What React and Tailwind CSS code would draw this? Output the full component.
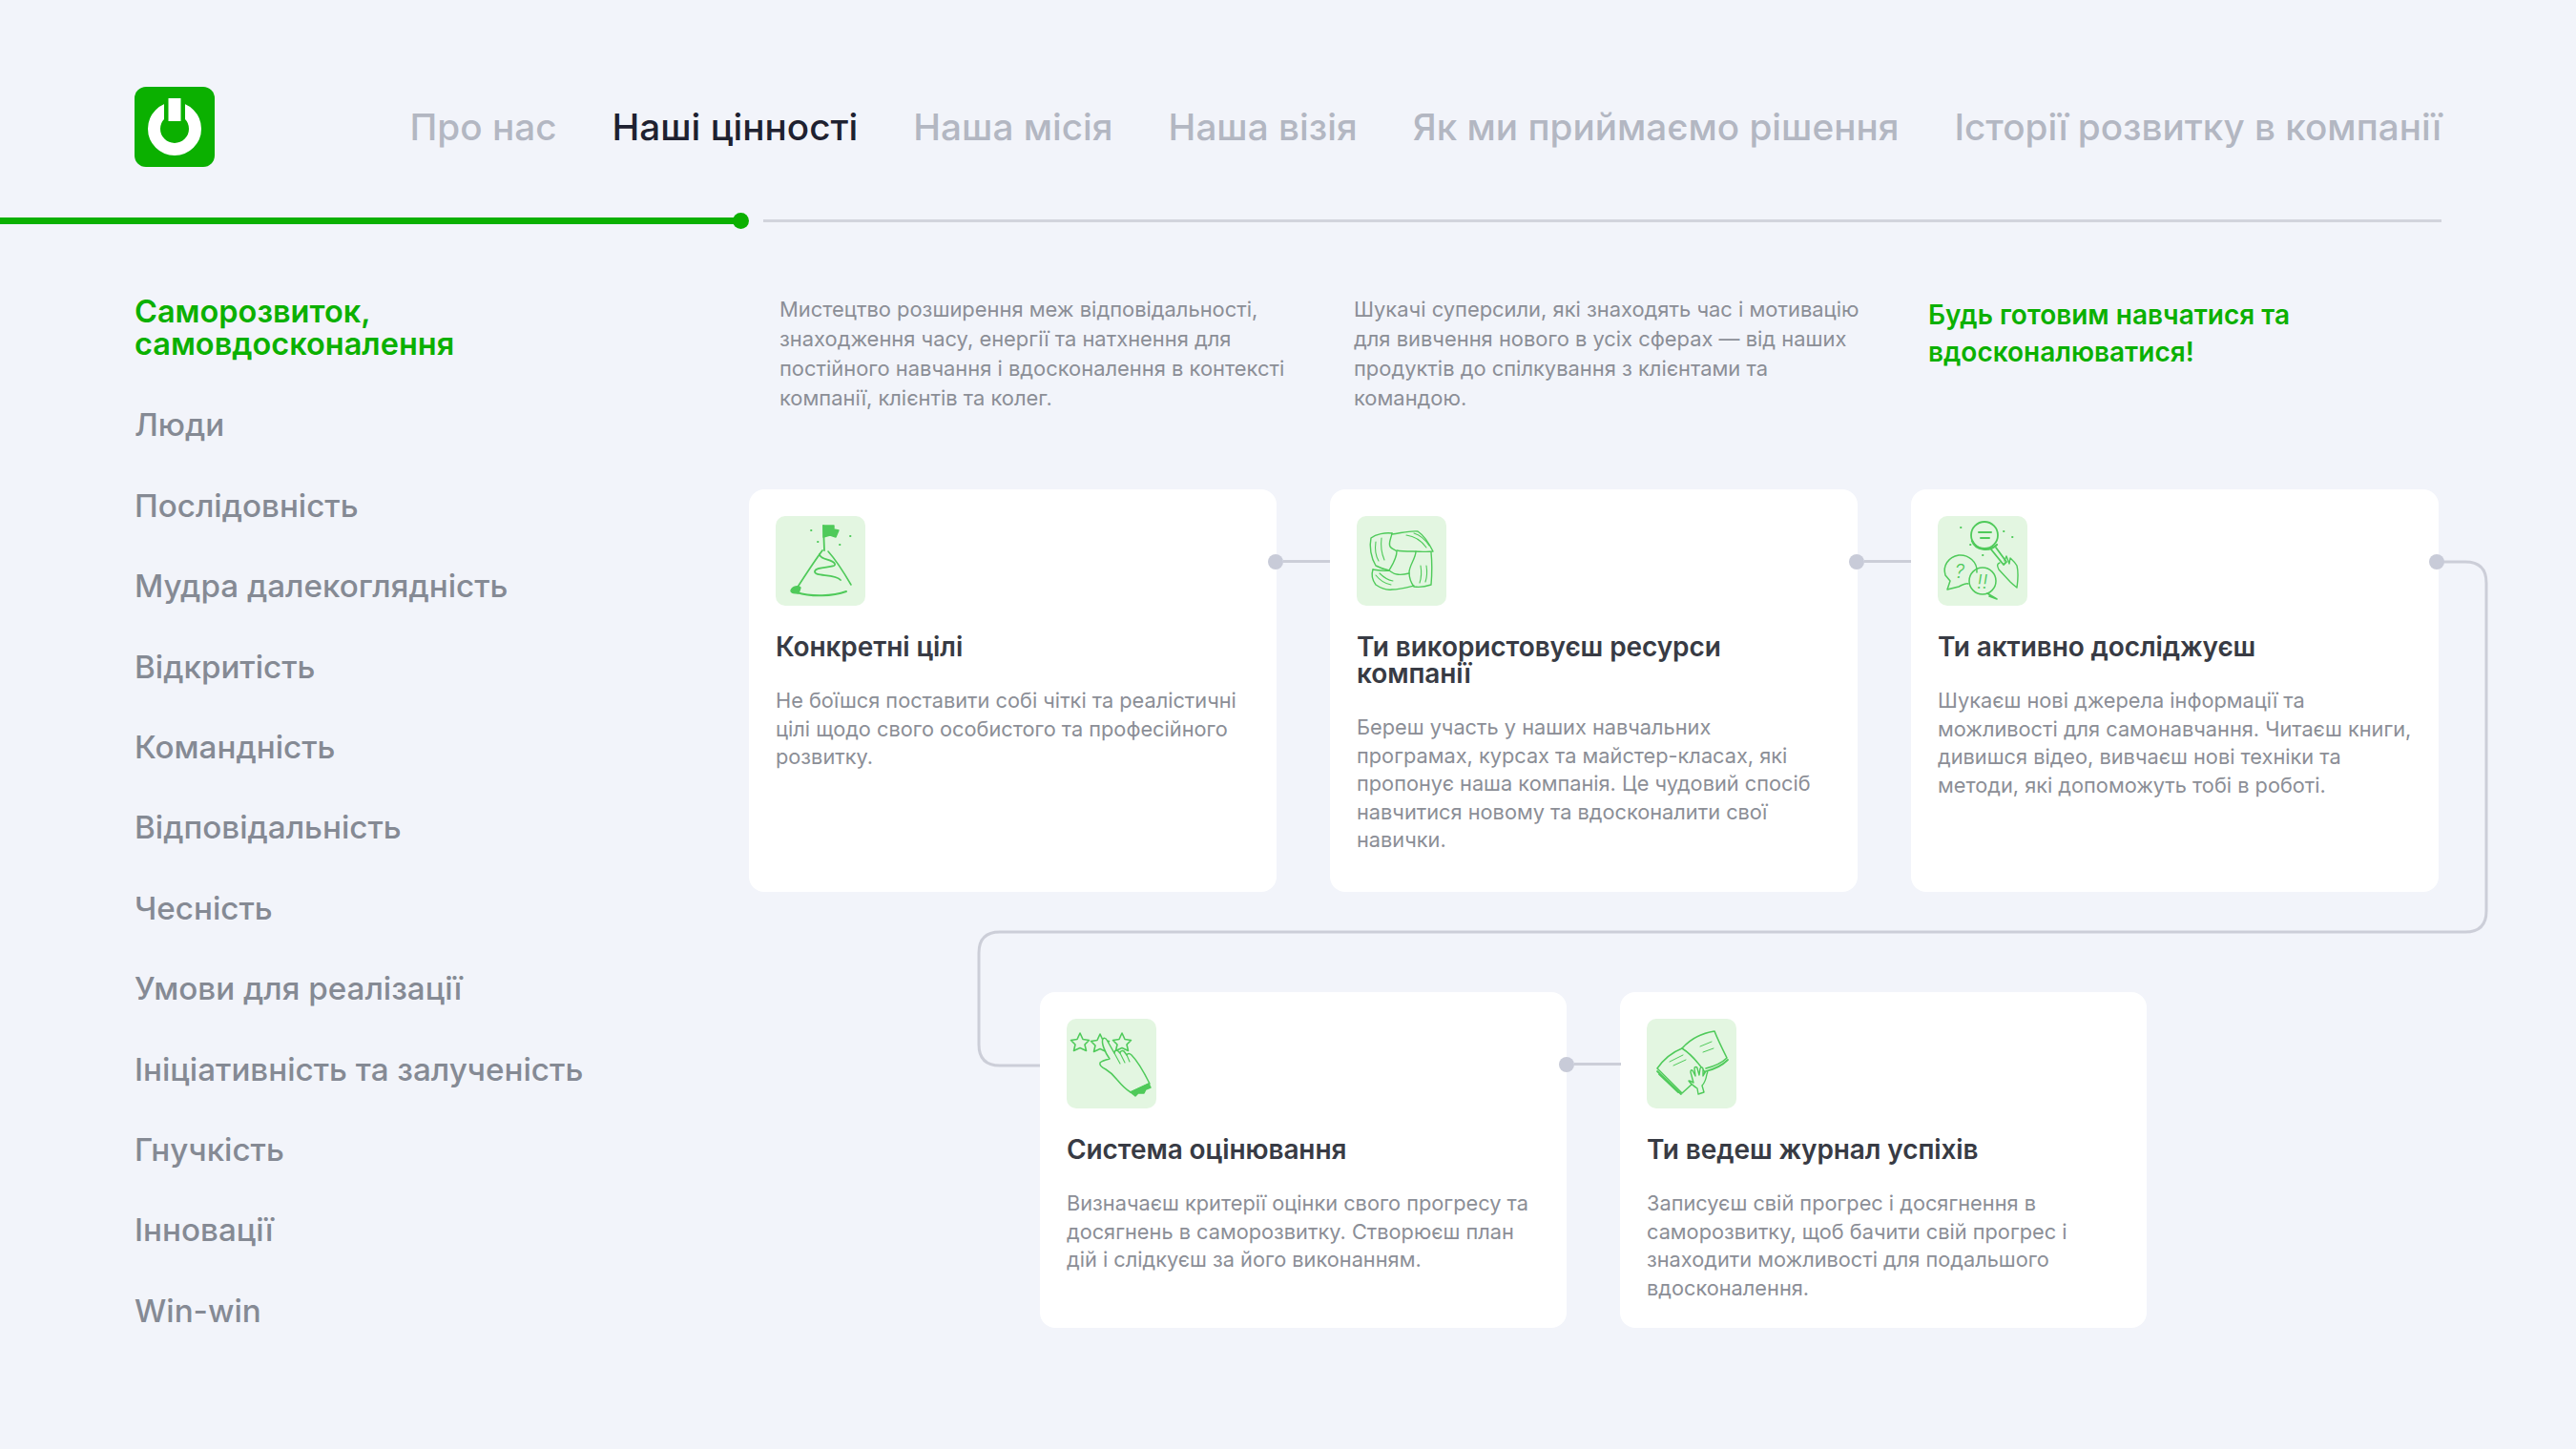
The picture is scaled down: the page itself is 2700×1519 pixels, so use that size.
import React from 'react';

const navItems = ['Про нас', 'Наші цінності', 'Наша місія', 'Наша візія', 'Як ми приймаємо рішення', 'Історії розвитку в компанії'];

const sideItems = ['Люди', 'Послідовність', 'Мудра далекоглядність', 'Відкритість', 'Командність', 'Відповідальність', 'Чесність', 'Умови для реалізації', 'Ініціативність та залученість', 'Гнучкість', 'Інновації', 'Win-win'];

const intro = [
  ['Мистецтво розширення меж відповідальності,', 'знаходження часу, енергії та натхнення для', 'постійного навчання і вдосконалення в контексті', 'компанії, клієнтів та колег.'],
  ['Шукачі суперсили, які знаходять час і мотивацію', 'для вивчення нового в усіх сферах — від наших', 'продуктів до спілкування з клієнтами та', 'командою.'],
];

function IconBox({ children }) {
  return (
    <div className="w-[94px] h-[94px] rounded-[10px] bg-[#e3f6e1] shrink-0">
      <svg width="94" height="94" viewBox="0 0 94 94" fill="none" stroke="#4fca5a" strokeWidth="1.4" strokeLinecap="round" strokeLinejoin="round">
        {children}
      </svg>
    </div>
  );
}

const FlagIcon = () => (
  <IconBox>
    <path d="M50 10 L51 36" strokeWidth="1.8" />
    <path d="M50 10 H61 V14 L66 15 L63 22 L57 20 L50 22 Z" fill="#4fca5a" />
    <path d="M49 36 C40 48 31 62 22 76" strokeWidth="1.8" />
    <path d="M55 37 C64 47 72 60 79 72" strokeWidth="1.6" />
    <path d="M46 40 C46 46 60 45 62 50 C64 55 42 52 41 58 C40 64 62 60 68 67" strokeWidth="1.8" />
    <path d="M16 78 C18 73 24 73 26 75 L24 81 C20 81 16 81 16 78 Z" fill="#4fca5a" />
    <path d="M22 80 C38 85 60 84 74 79" strokeWidth="2" />
    <path d="M37 15 h.5 M78 21 h.5 M44 27 h.5 M67 30 h.5" strokeWidth="1.8" />
  </IconBox>
);

const HandsIcon = () => (
  <IconBox>
    {/* top-left hand coming up from the wrist */}
    <path d="M37 18 C30 17 20 19 15 23 C13 32 15 44 20 52 C24 54 29 56 34 57" />
    <path d="M37 18 C36 24 33 28 35 32 C37 35 41 35 42 37 C42 44 38 50 34 57" />
    <path d="M20 27 C19 34 20 42 23 47 M26 23 C25 31 26 39 29 46" strokeWidth="1.1" />
    {/* top-right hand */}
    <path d="M37 19 C46 18 56 15 64 16 C70 20 76 29 80 37 C72 38 66 37 59 37 C52 37 46 37 42 36" />
    <path d="M52 20 C60 21 68 26 73 33 M60 18 C67 20 72 25 76 31" strokeWidth="1.1" />
    {/* bottom-right hand */}
    <path d="M62 37 C62 44 55 52 55 59 C55 65 57 70 60 74 C66 75 72 74 78 72 C79 60 79 48 78 38" />
    <path d="M66 70 C68 64 68 58 67 52 M72 69 C74 63 74 58 73 52" strokeWidth="1.1" />
    {/* bottom-left hand */}
    <path d="M17 56 C23 57 28 58 34 57 C37 59 39 61 42 61 C46 62 51 61 55 60" />
    <path d="M17 56 C15 62 17 68 20 72 C26 76 32 78 37 77 C45 77 52 75 60 73" />
    <path d="M20 62 C24 67 30 71 36 72 M24 60 C28 64 32 67 38 68" strokeWidth="1.1" />
  </IconBox>
);

const SearchIcon = () => (
  <IconBox>
    <circle cx="49" cy="20" r="14" strokeWidth="1.8" />
    <path d="M36 26 C40 36 54 38 62 30" strokeWidth="2.2" />
    <path d="M43 17 H56 M45 23 H54" strokeWidth="2" />
    <path d="M56 35 L69 51 L72 48 L61 33" strokeWidth="1.8" />
    <path d="M65 49 C62 50 62 52 64 56 L76 69 C79 72 82 74 83 75 C84 68 85 60 83 52 C81 48 78 46 76 44 L75 50 L72 42 L70 47" />
    <path d="M41 59 C42 48 32 40 22 41 C11 43 5 52 8 62 L13 68 L10 77 L22 74 C26 72 30 70 32 71" strokeWidth="1.5" />
    <circle cx="47" cy="68" r="14" strokeWidth="1.5" />
    <path d="M52 81 L62 87 L54 84" strokeWidth="1.6" />
    <text x="18" y="65" fontFamily="Inter, sans-serif" fontSize="20" fontWeight="300" fill="#4fca5a" stroke="none" fontStyle="italic">?</text>
    <text x="41" y="76" fontFamily="Inter, sans-serif" fontSize="20" fontWeight="300" fill="#4fca5a" stroke="none" fontStyle="italic">!!</text>
    <path d="M24 12 h.5 M69 16 h.5 M78 22 h.5 M34 30 h.5 M47 41 h.5" strokeWidth="1.8" />
  </IconBox>
);

const Star = ({ x, y }) => (
  <path
    transform={`translate(${x} ${y})`}
    d="M0 -10 L3 -3.5 L9.5 -2.5 L5 2 L6.5 8.5 L0 5.5 L-6.5 8.5 L-5 2 L-9.5 -2.5 L-3 -3.5 Z"
    strokeWidth="1.6"
  />
);

const RatingIcon = () => (
  <IconBox>
    <Star x={14} y={25} />
    <Star x={35} y={26} />
    <Star x={58} y={25} />
    <path d="M38 21 C36 25 40 35 45 42 C41 43 37 44 35 46 C34 49 37 51 41 53 C46 56 50 60 53 64 C58 70 62 74 67 77 L87 68 C82 58 76 46 68 38 C66 36 64 36 63 38 L60 34 C58 33 56 34 56 36 L53 33 C51 33 50 34 50 36 L42 22 C41 20 39 20 38 21 Z" strokeWidth="1.5" fill="#e3f6e1" />
    <path d="M50 36 L56 47 M56 36 L61 46 M63 38 L66 45" strokeWidth="1.1" />
    <path d="M67 77 L86 68 L88 72 L83 74 L81 78 L75 78 L72 81 Z" fill="#4fca5a" />
  </IconBox>
);

const BookIcon = () => (
  <IconBox>
    <path d="M11 52 C18 42 27 35 37 31 C45 36 54 46 61 56 L37 78 Z" strokeWidth="1.5" />
    <path d="M37 31 C46 21 58 15 71 13 C75 23 80 33 84 41 C78 47 70 50 62 52" strokeWidth="1.6" />
    <path d="M11 55 L36 79 M13 58 L33 77" strokeWidth="1.8" />
    <path d="M62 55 C70 53 78 50 85 43" strokeWidth="1.8" />
    <path d="M24 45 L38 38 M28 49 L41 43 M56 29 L68 24 M59 35 L70 31" strokeWidth="1" />
    <path d="M44 65 C46 65 47 66 49 67 L46 56 C46 53 48 53 49 56 L51 60 L50 52 C50 50 53 50 53 52 L55 59 L56 52 C57 50 59 51 59 53 L59 60 L62 55 C64 54 64 56 63 58 C62 64 60 68 58 70 L60 77 L54 79 L53 73 C50 71 46 68 44 65 Z" fill="#e3f6e1" strokeWidth="1.4" />
  </IconBox>
);

function Link() {
  return (
    <div className="absolute left-[544px] top-[67px] w-[65px] h-[17px] flex items-center z-10">
      <div className="w-[16px] h-[16px] rounded-full bg-[#c8cbd8] shrink-0" />
      <div className="h-[3px] flex-1 bg-[#ccced8]" />
    </div>
  );
}

function Card({ icon, title, text, linked, className }) {
  return (
    <div className={`relative bg-white rounded-[16px] p-[28px] ${className}`}>
      {icon}
      <h3 className="mt-[29px] text-[28px] leading-[28px] font-semibold text-[#383b44] tracking-[-0.1px]">{title}</h3>
      <div className="mt-[28px] text-[21.75px] leading-[29.5px] text-[#8b8e96]">
        {text.map((line) => <div key={line} className="whitespace-nowrap">{line}</div>)}
      </div>
      {linked && <Link />}
    </div>
  );
}

export default function App() {
  return (
    <div className="w-[2700px] h-[1519px] bg-[#f2f4fa] overflow-hidden font-[Inter,sans-serif]">
      <header className="flex items-center justify-between pt-[91px] pl-[141px] pr-[141px]">
        <div className="w-[84px] h-[84px] rounded-[12px] bg-[#0bb000] flex items-center justify-center">
          <svg width="60" height="62" viewBox="0 0 60 62">
            <circle cx="30" cy="33" r="21.5" fill="none" stroke="#fff" strokeWidth="13" />
            <rect x="19" y="0" width="22" height="29" fill="#0bb000" />
            <rect x="23.5" y="1" width="13" height="24" fill="#fff" />
          </svg>
        </div>
        <nav className="flex gap-[58px] text-[38.7px] leading-[48px] font-medium text-[#b3b7c2]">
          {navItems.map((item, i) => (
            <span key={item} className={i === 1 ? 'text-[#1e2130]' : ''}>{item}</span>
          ))}
        </nav>
      </header>

      <div className="mt-[48px] flex items-center h-[17px] pr-[141px]">
        <div className="w-[770px] h-[7px] bg-[#0bb000]" />
        <div className="w-[17px] h-[17px] -ml-[2px] rounded-full bg-[#0bb000] shrink-0" />
        <div className="ml-[15px] flex-1 h-[3px] bg-[#d2d4dc]" />
      </div>

      <div className="flex">
        <aside className="w-[785px] pl-[141px] pt-[70px] shrink-0">
          <div className="flex flex-col gap-[50.4px] text-[33.2px] leading-[34px] font-medium text-[#858a94]">
            <div className="text-[32.5px] text-[#0bb000] font-semibold">Саморозвиток,<br />самовдосконалення</div>
            {sideItems.map((item) => <div key={item}>{item}</div>)}
          </div>
        </aside>

        <main className="flex-1">
          <div className="h-[273px] pt-[69px] pl-[32px] flex">
            {intro.map((lines) => (
              <div key={lines[0]} className="w-[602px] text-[21.9px] leading-[31px] text-[#8b8e96]">
                {lines.map((line) => <div key={line} className="whitespace-nowrap">{line}</div>)}
              </div>
            ))}
            <div className="mt-[2px] text-[28px] leading-[39px] font-semibold text-[#0bb000]">
              Будь готовим навчатися та<br />вдосконалюватися!
            </div>
          </div>

          <div className="relative">
            <div className="relative grid grid-cols-3 gap-[56px] w-[1771px]">
              <Card
                className="h-[422px]"
                icon={<FlagIcon />}
                title="Конкретні цілі"
                text={['Не боїшся поставити собі чіткі та реалістичні', 'цілі щодо свого особистого та професійного', 'розвитку.']}
                linked
              />
              <Card
                className="h-[422px]"
                icon={<HandsIcon />}
                title={<>Ти використовуєш ресурси<br />компанії</>}
                text={['Береш участь у наших навчальних', 'програмах, курсах та майстер-класах, які', 'пропонує наша компанія. Це чудовий спосіб', 'навчитися новому та вдосконалити свої', 'навички.']}
                linked
              />
              <Card
                className="h-[422px]"
                icon={<SearchIcon />}
                title="Ти активно досліджуєш"
                text={['Шукаєш нові джерела інформації та', 'можливості для самонавчання. Читаєш книги,', 'дивишся відео, вивчаєш нові техніки та', 'методи, які допоможуть тобі в роботі.']}
              />
            </div>

            <div className="relative mt-[105px] ml-[305px] flex gap-[56px]">
              <Card
                className="w-[552px] h-[352px]"
                icon={<RatingIcon />}
                title="Система оцінювання"
                text={['Визначаєш критерії оцінки свого прогресу та', 'досягнень в саморозвитку. Створюєш план', 'дій і слідкуєш за його виконанням.']}
                linked
              />
              <Card
                className="w-[552px] h-[352px]"
                icon={<BookIcon />}
                title="Ти ведеш журнал успіхів"
                text={['Записуєш свій прогрес і досягнення в', 'саморозвитку, щоб бачити свій прогрес і', 'знаходити можливості для подальшого', 'вдосконалення.']}
              />
            </div>

            {/* line that carries on from the last card of the first row */}
            <svg className="absolute left-0 top-0 overflow-visible" width="1830" height="620" fill="none">
              <path d="M1771 76 H1799 Q1821 76 1821 98 V442 Q1821 464 1799 464 H263 Q241 464 241 486 V582 Q241 604 263 604 H305" stroke="#ccced8" strokeWidth="3" />
              <circle cx="1769" cy="76" r="8" fill="#c8cbd8" />
            </svg>
          </div>
        </main>
      </div>
    </div>
  );
}
